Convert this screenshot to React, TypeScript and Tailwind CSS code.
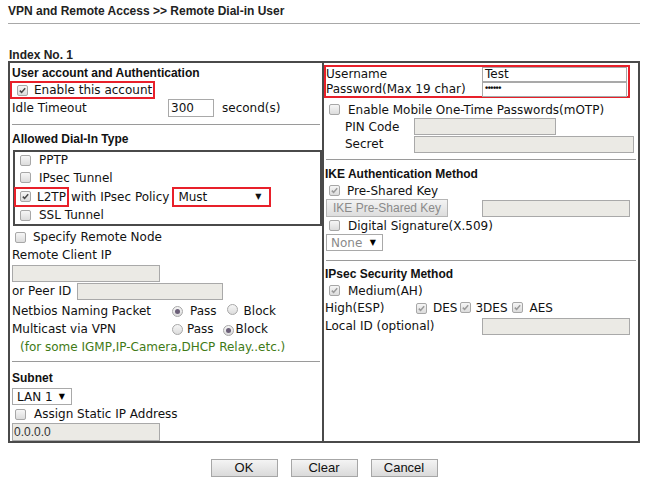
import React from 'react';

function Check({ checked = false, disabled = false }: { checked?: boolean; disabled?: boolean }) {
  return (
    <span className="inline-flex items-center justify-center w-[11px] h-[11px] shrink-0 rounded-[2px] border border-[#a7a7a7] bg-linear-to-b from-[#f6f6f6] to-[#dcdcdc]">
      {checked && (
        <svg width="9" height="9" viewBox="0 0 9 9">
          <path d="M1.8 4.6 L3.6 6.4 L7.2 2.2" fill="none" stroke={disabled ? '#9a9a9a' : '#4a4a4a'} strokeWidth="1.5" />
        </svg>
      )}
    </span>
  );
}

function Radio({ on = false }: { on?: boolean }) {
  return (
    <span className="inline-flex items-center justify-center w-[11px] h-[11px] shrink-0 rounded-full border border-[#a7a7a7] bg-linear-to-b from-[#f6f6f6] to-[#dcdcdc]">
      {on && <span className="w-[5px] h-[5px] rounded-full bg-[#6b5f78]" />}
    </span>
  );
}

function Select({ text, w, dim = false }: { text: string; w: string; dim?: boolean }) {
  return (
    <div className={`${w} h-full flex items-center justify-between bg-white border border-[#a9a9a9] pl-[4px] pr-[6px]`}>
      <span className={dim ? 'text-[#8a8a8a]' : ''}>{text}</span>
      <span className="text-[8px] leading-none text-black">▼</span>
    </div>
  );
}

const grayInput = 'bg-[#ebeae5] border border-[#a9a9a9]';

export default function App() {
  return (
    <div className="w-[648px] h-[486px] bg-white text-[12px] text-[#111] whitespace-nowrap font-['DejaVu_Sans',sans-serif] overflow-hidden">
      {/* Title */}
      <div className="h-[21px] flex items-center pl-2 font-['Liberation_Sans',Arial,sans-serif] font-bold text-[12px] text-[#222]">
        VPN and Remote Access &gt;&gt; Remote Dial-in User
      </div>
      <div className="mt-[2px] mx-2 h-px bg-[#a8a8a8]" />

      <div className="mt-[21px] h-[16px] pt-[4px] flex items-center pl-[9px] font-['Liberation_Sans',Arial,sans-serif] font-bold text-[#222]">
        Index No. 1
      </div>

      {/* Main table */}
      <div className="ml-2 w-[632px] h-[382px] border-2 border-[#4a4a4a] flex">
        {/* Left column */}
        <div className="w-[312px] pt-[2px] flex flex-col overflow-hidden">
          <div className="h-[16px] flex items-center pl-[2px] font-['Liberation_Sans',Arial,sans-serif] font-bold">
            User account and Authentication
          </div>
          <div className="h-[18px] w-[145px] border-2 border-[#e8202a] flex items-center pl-[5px] gap-[6px]">
            <Check checked />
            <span>Enable this account</span>
          </div>
          <div className="h-[18px] flex items-center pl-[2px]">
            <span className="w-[156px]">Idle Timeout</span>
            <div className="w-[46px] h-[18px] border border-[#a9a9a9] flex items-center pl-[2px]">300</div>
            <span className="ml-[8px]">second(s)</span>
          </div>
          <div className="mt-[7px] ml-[2px] mr-[2px] h-px bg-[#9a9a9a]" />
          <div className="mt-[6px] h-[16px] flex items-center pl-[2px] font-['Liberation_Sans',Arial,sans-serif] font-bold">
            Allowed Dial-In Type
          </div>
          <div className="mt-[3px] ml-[3px] h-[76px] border-2 border-[#4a4a4a] flex flex-col">
            <div className="h-[16px] flex items-center pl-[5px] gap-[8px]">
              <Check />
              <span>PPTP</span>
            </div>
            <div className="h-[19px] flex items-center pl-[5px] gap-[8px]">
              <Check />
              <span>IPsec Tunnel</span>
            </div>
            <div className="h-[19px] flex items-center">
              <div className="h-[20px] w-[55px] -ml-[1px] border-2 border-[#e8202a] flex items-center pl-[4px] gap-[6px]">
                <Check checked />
                <span>L2TP</span>
              </div>
              <span className="ml-[2px]">with IPsec Policy</span>
              <div className="ml-[3px] h-[20px] w-[99px] border-2 border-[#e8202a] flex items-center">
                <div className="w-full h-full flex items-center justify-between bg-white pl-[4px] pr-[8px]">
                  <span>Must</span>
                  <span className="text-[8px] leading-none">▼</span>
                </div>
              </div>
            </div>
            <div className="h-[18px] flex items-center pl-[5px] gap-[8px]">
              <Check />
              <span>SSL Tunnel</span>
            </div>
          </div>
          <div className="mt-[2px] h-[18px] flex items-center pl-[5px] gap-[7px]">
            <Check />
            <span>Specify Remote Node</span>
          </div>
          <div className="h-[17px] flex items-center pl-[2px]">Remote Client IP</div>
          <div className={`mt-[2px] ml-[2px] w-[148px] h-[17px] ${grayInput}`} />
          <div className="h-[18px] flex items-center pl-[2px]">
            <span className="w-[65px]">or Peer ID</span>
            <div className={`w-[146px] h-[17px] ${grayInput}`} />
          </div>
          <div className="mt-[2px] h-[18px] flex items-center pl-[2px]">
            <span className="w-[160px]">Netbios Naming Packet</span>
            <Radio on />
            <span className="ml-[7px]">Pass</span>
            <span className="ml-[10px]"><Radio /></span>
            <span className="ml-[6px]">Block</span>
          </div>
          <div className="h-[18px] flex items-center pl-[2px]">
            <span className="w-[160px]">Multicast via VPN</span>
            <Radio />
            <span className="ml-[4px]">Pass</span>
            <span className="ml-[9px]"><Radio on /></span>
            <span className="ml-[2px]">Block</span>
          </div>
          <div className="h-[18px] flex items-center pl-[10px] text-[#3f7a16]">
            (for some IGMP,IP-Camera,DHCP Relay..etc.)
          </div>
          <div className="mt-[5px] ml-[2px] mr-[2px] h-px bg-[#9a9a9a]" />
          <div className="mt-[8px] h-[16px] flex items-center pl-[2px] font-['Liberation_Sans',Arial,sans-serif] font-bold">
            Subnet
          </div>
          <div className="mt-[2px] ml-[2px] h-[17px] shrink-0">
            <Select text="LAN 1" w="w-[60px]" />
          </div>
          <div className="h-[18px] shrink-0 flex items-center pl-[5px] gap-[8px]">
            <Check />
            <span>Assign Static IP Address</span>
          </div>
          <div className={`ml-[2px] w-[148px] h-[18px] shrink-0 ${grayInput} flex items-center pl-[1px] font-['Liberation_Sans',Arial,sans-serif] text-[#333]`}>
            0.0.0.0
          </div>
        </div>

        {/* Right column */}
        <div className="flex-1 border-l-2 border-[#4a4a4a] flex flex-col">
          <div className="mt-[2px] w-[306px] h-[33px] border-2 border-[#e8202a] flex flex-col gap-px">
            <div className="h-[14px] flex items-center">
              <span className="w-[156px]">Username</span>
              <div className="w-[145px] h-[15px] bg-white border border-[#a9a9a9] flex items-center pl-[2px]">Test</div>
            </div>
            <div className="h-[14px] flex items-center">
              <span className="w-[156px]">Password(Max 19 char)</span>
              <div className="w-[145px] h-[15px] bg-white border border-[#a9a9a9] flex items-center pl-[2px] font-['Liberation_Sans',Arial,sans-serif] font-bold text-[9px] tracking-[-0.5px]">••••••</div>
            </div>
          </div>
          <div className="mt-[3px] h-[17px] flex items-center pl-[5px] gap-[8px]">
            <Check />
            <span>Enable Mobile One-Time Passwords(mOTP)</span>
          </div>
          <div className="h-[17px] flex items-center pl-[21px]">
            <span className="w-[69px]">PIN Code</span>
            <div className={`w-[142px] h-[17px] ${grayInput}`} />
          </div>
          <div className="h-[18px] flex items-center pl-[21px]">
            <span className="w-[69px]">Secret</span>
            <div className={`w-[220px] h-[17px] ${grayInput}`} />
          </div>
          <div className="mt-[6px] ml-[2px] w-[310px] h-px bg-[#9a9a9a]" />
          <div className="mt-[6px] h-[16px] flex items-center pl-[1px] font-['Liberation_Sans',Arial,sans-serif] font-bold">
            IKE Authentication Method
          </div>
          <div className="h-[17px] flex items-center pl-[5px] gap-[7px]">
            <Check checked disabled />
            <span>Pre-Shared Key</span>
          </div>
          <div className="h-[18px] flex items-center pl-[2px]">
            <div className="w-[122px] h-[18px] bg-linear-to-b from-[#f3f3f3] to-[#dddddd] border border-[#b5b5b5] flex items-center justify-center font-['Liberation_Sans',Arial,sans-serif] text-[12px] text-[#8a8a8a]">
              IKE Pre-Shared Key
            </div>
            <div className={`ml-[34px] w-[148px] h-[17px] ${grayInput}`} />
          </div>
          <div className="h-[17px] flex items-center pl-[5px] gap-[8px]">
            <Check />
            <span>Digital Signature(X.509)</span>
          </div>
          <div className="ml-[2px] h-[17px]">
            <Select text="None" w="w-[57px]" dim />
          </div>
          <div className="mt-[9px] ml-[2px] w-[310px] h-px bg-[#9a9a9a]" />
          <div className="mt-[5px] h-[16px] flex items-center pl-[1px] font-['Liberation_Sans',Arial,sans-serif] font-bold">
            IPsec Security Method
          </div>
          <div className="h-[17px] flex items-center pl-[5px] gap-[8px]">
            <Check checked disabled />
            <span>Medium(AH)</span>
          </div>
          <div className="h-[18px] flex items-center pl-[1px]">
            <span className="w-[91px]">High(ESP)</span>
            <Check checked disabled />
            <span className="ml-[6px]">DES</span>
            <span className="ml-[3px]"><Check checked disabled /></span>
            <span className="ml-[4px]">3DES</span>
            <span className="ml-[4px]"><Check checked disabled /></span>
            <span className="ml-[7px]">AES</span>
          </div>
          <div className="h-[18px] flex items-center pl-[1px]">
            <span className="w-[157px]">Local ID (optional)</span>
            <div className={`w-[148px] h-[17px] ${grayInput}`} />
          </div>
        </div>
      </div>

      {/* Buttons */}
      <div className="mt-[16px] flex justify-center gap-[13px] font-['Liberation_Sans',Arial,sans-serif] text-[13px]">
        {['OK', 'Clear', 'Cancel'].map(b => (
          <div key={b} className="w-[67px] h-[18px] bg-linear-to-b from-[#f4f4f4] to-[#dadada] border border-[#a6a6a6] flex items-center justify-center text-[#111]">
            {b}
          </div>
        ))}
      </div>
    </div>
  );
}
